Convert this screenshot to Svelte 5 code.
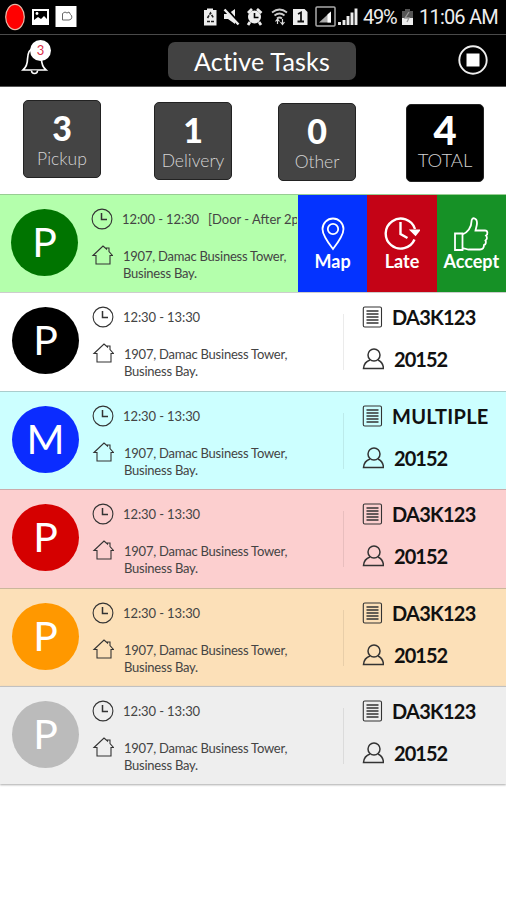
<script>
  // Totals shown above the list. `drop` is the small vertical offset of
  // each tile within the strip.
  const totals = [
    { count: 3, label: 'Pickup', drop: 13, left: 23 },
    { count: 1, label: 'Delivery', drop: 15, left: 53 },
    { count: 0, label: 'Other', drop: 16, left: 46 },
    { count: 4, label: 'TOTAL', drop: 17, left: 50, total: true },
  ];

  const tasks = [
    { type: 'P', tone: 'green', time: '12:00 - 12:30', note: '[Door - After 2pm]', open: true },
    { type: 'P', tone: 'white', time: '12:30 - 13:30', ref: 'DA3K123', customer: '20152' },
    { type: 'M', tone: 'cyan', time: '12:30 - 13:30', ref: 'MULTIPLE', customer: '20152' },
    { type: 'P', tone: 'red', time: '12:30 - 13:30', ref: 'DA3K123', customer: '20152' },
    { type: 'P', tone: 'orange', time: '12:30 - 13:30', ref: 'DA3K123', customer: '20152' },
    { type: 'P', tone: 'grey', time: '12:30 - 13:30', ref: 'DA3K123', customer: '20152' },
  ];
</script>

<div class="app">
  <div class="status">
    <svg class="status-left" width="80" height="34" viewBox="0 0 80 34">
      <ellipse cx="15" cy="17" rx="9.3" ry="12.6" fill="#f00" stroke="#e9b8a8" stroke-width="1.2" />
      <path d="M33 10h15v14h-15z" fill="none" stroke="#fff" stroke-width="2" />
      <path d="M34 11h13v6l-3-2-3 3-3-2-4 4z" fill="#000" />
      <path d="M34 20l4-3 3 2 3-3 3 3v4H34z" fill="#fff" />
      <circle cx="37" cy="13.5" r="1.4" fill="#fff" />
      <path d="M55.5 6h21v21h-21z" fill="#fff" />
      <path d="M62.500 20v-6.500l2.500-1.500 2 1 2-1 1.500 2.500a3 3 0 0 1-1.500 5.500z" fill="none" stroke="#666" />
    </svg>
    <svg class="status-right" width="158" height="34" viewBox="203 0 158 34">
      <path d="M204 10h3V8.500h6V10h3.500v15.500H204z" fill="#eee" />
      <path d="M207.500 18l3-5 3 5M207 21.500h7" fill="none" stroke="#222" stroke-width="1.600" stroke-dasharray="3 1" />
      <path d="M224 14h4l7-5v15l-7-5h-4z" fill="#eee" />
      <path d="M225.500 7.500l14 16" stroke="#000" stroke-width="2" />
      <path d="M224.500 9.500l14 15" stroke="#eee" stroke-width="2.400" />
      <circle cx="254.500" cy="17" r="6.500" fill="#eee" />
      <path d="M248 13l4-4M257 9l4.500 4M250 22l-2 3M259 22l2 3" stroke="#eee" stroke-width="2.800" />
      <path d="M254.500 13v4.500h4" fill="none" stroke="#000" stroke-width="1.600" />
      <path d="M272 12.500q7.500-6 15 0M274.500 15.500q5-4 10 0M277 18.500q2.500-2 5 0" fill="none" stroke="#ccc" stroke-width="1.800" />
      <path d="M277.500 19v5M275.500 21.500l2-2.500 2 2.500M282.500 19v5M280.500 22l2 2.500 2-2.500" fill="none" stroke="#ddd" stroke-width="1.200" />
      <path d="M293 9h11.500l3 3v13H293z" fill="#eee" />
      <path d="M298 14l3-1.500V21M297.500 21.500h6.500" fill="none" stroke="#111" stroke-width="1.800" />
      <rect x="316" y="7" width="19" height="19" rx="1" fill="none" stroke="#aaa" stroke-width="1.500" />
      <path d="M319 22.500l12-11v11z" fill="#aaa" />
      <path d="M327.500 22.500v-8l3.500-3v11z" fill="#fff" />
      <path d="M339.500 22v3M344 20v5M348 16v9M352 12.500v12.500M356 8.500V25" stroke="#eee" stroke-width="2.900" />
    </svg>
    <span class="percent">49%</span>
    <svg class="battery" width="13" height="18" viewBox="0 0 13 18">
      <path d="M1 3h3V1h5v2h3v7H1z" fill="#555" />
      <path d="M1 10h11v7H1z" fill="#eee" />
      <path d="M8 4l-4 6h4l-2 4" fill="none" stroke="#999" stroke-width="1.300" />
    </svg>
    <span class="time">11:06 AM</span>
  </div>

  <header>
    <div class="bell">
      <svg width="28" height="30" viewBox="0 0 28 30">
        <path d="M2 25q4.500-4 4.500-11Q7 4 13 3q7 1 7.500 11 0 7 4.500 11z" fill="none" stroke="#fff" stroke-width="1.700" />
        <path d="M10.500 25.500a3 3 0 0 0 6 0" fill="#000" stroke="#fff" stroke-width="1.500" />
      </svg>
      <span class="count">3</span>
    </div>
    <h1>Active Tasks</h1>
    <svg class="stop" width="30" height="30" viewBox="0 0 30 30">
      <circle cx="15" cy="15" r="13.700" fill="none" stroke="#eee" stroke-width="1.900" />
      <path d="M8.500 8.500h13v13h-13z" fill="#fff" />
    </svg>
  </header>

  <section class="totals">
    {#each totals as item}
      <div class="tile" class:total={item.total} style="margin: {item.drop}px 0 0 {item.left}px">
        <strong>{item.count}</strong>
        <span>{item.label}</span>
      </div>
    {/each}
  </section>

  {#each tasks as task}
    <article class="task {task.tone}" class:open={task.open}>
      <div class="type">{task.type}</div>

      <div class="details">
        <div class="slot">
          <svg width="22" height="22" viewBox="0 0 22 22">
            <circle cx="11" cy="11" r="9.900" />
            <path d="M10.500 5v6.500h5.500" stroke-width="1.500" />
          </svg>
          <span class="hours">{task.time}</span>
          {#if task.note}<span class="note">{task.note}</span>{/if}
        </div>
        <div class="place">
          <svg width="22" height="21" viewBox="0 0 22 21">
            <path d="M2 11.500L12 2l3.500 3V4h2.500v3.500l3.500 4h-2.500V20H5v-8.500z" />
          </svg>
          <p>1907, Damac Business Tower,<br />Business Bay.</p>
        </div>
      </div>

      {#if task.open}
        <div class="actions">
          <button type="button" class="map">
            <svg width="36" height="36" viewBox="0 0 36 36">
              <path d="M18 33Q7.500 19.500 7.500 13a10.500 10.500 0 0 1 21 0Q28.500 19.500 18 33z" />
              <circle cx="18" cy="13" r="5.200" />
            </svg>
            Map
          </button>
          <button type="button" class="late">
            <svg width="36" height="36" viewBox="0 0 36 36">
              <path d="M30.500 23.500A15 15 0 1 1 31 13" stroke-width="2.400" />
              <path d="M27 14.500h8l-3.500 4.500z" fill="#fff" />
              <path d="M16.500 6v12l7 4" stroke-width="2.400" />
            </svg>
            Late
          </button>
          <button type="button" class="accept">
            <svg width="36" height="36" viewBox="0 0 36 36">
              <path d="M2 17.500h7.500V34H2zM9.500 18.500c5-2 9-7 9-13 0-5 5.500-4 5.500 1.500 0 3-1 5-1.500 7.500H32c3 0 3 4 1 5 1.500 2 1 4-.5 5 1 2 0 4-1.500 4.500 0 3-1 4.500-4 4.500H15.500l-6-1.500" />
            </svg>
            Accept
          </button>
        </div>
      {:else}
        <div class="codes">
          <div>
            <svg width="22" height="22" viewBox="0 0 22 22">
              <rect x="1.300" y="1" width="18.200" height="20" rx="1.500" />
              <path d="M4.500 5h12M4.500 8h12M4.500 11h12M4.500 14h12M4.500 17h12" stroke-width="1.300" />
            </svg>
            <b class="ref" class:wide={task.ref === 'MULTIPLE'}>{task.ref}</b>
          </div>
          <div>
            <svg width="22" height="22" viewBox="0 0 22 22">
              <circle cx="12" cy="7" r="6" stroke-width="1.500" />
              <path d="M8 12q-6 2-6.500 8.500h20Q21 14 16 12" stroke-width="1.500" />
            </svg>
            <b class="customer">{task.customer}</b>
          </div>
        </div>
      {/if}
    </article>
  {/each}
</div>

<style>
  :global(body) {
    margin: 0;
    background: #fff;
  }

  .app {
    width: 506px;
    height: 900px;
    overflow: hidden;
    font-family: Lato, 'Liberation Sans', sans-serif;
    background: #fff;
  }

  .app,
  .app * {
    box-sizing: border-box;
  }

  svg {
    display: block;
    flex: none;
  }

  .status {
    display: flex;
    align-items: center;
    height: 35px;
    color: #eee;
    background: #000;
    border-bottom: 1px solid #4a4a4a;
    font: 20px/36px Roboto, sans-serif;
    white-space: nowrap;
  }

  .status-right {
    margin-left: 123px;
  }

  .percent {
    width: 38px;
    margin-left: 2px;
    letter-spacing: -1.2px;
  }

  .time {
    margin-left: 5px;
    letter-spacing: -0.8px;
  }

  header {
    display: flex;
    align-items: flex-start;
    height: 52px;
    color: #fff;
    background: #000;
    border-bottom: 1px solid #555;
  }

  .bell {
    position: relative;
    margin: 10px 0 0 21px;
  }

  .count {
    position: absolute;
    top: -5px;
    left: 9px;
    width: 21px;
    height: 21px;
    border-radius: 50%;
    background: #fff;
    color: #d8304a;
    font-size: 13px;
    line-height: 21px;
    text-align: center;
  }

  h1 {
    width: 188px;
    height: 38px;
    margin: 7px 0 0 119px;
    border-radius: 7px;
    background: #424242;
    font-size: 25px;
    font-weight: 400;
    line-height: 39px;
    letter-spacing: 0.2px;
    text-align: center;
  }

  .stop {
    margin: 10px 0 0 102px;
  }

  .totals {
    display: flex;
    align-items: flex-start;
    height: 107px;
  }

  .tile {
    display: flex;
    flex: none;
    flex-direction: column;
    align-items: center;
    width: 78px;
    height: 78px;
    padding-top: 11px;
    border: 1px solid #222;
    border-radius: 5px;
    background: #444;
    color: #fff;
  }

  .tile strong {
    font-size: 34px;
    font-weight: 900;
    line-height: 32px;
  }

  .tile span {
    margin-top: 5px;
    color: #d4d4d4;
    font-size: 17.5px;
    font-weight: 300;
    line-height: 20px;
  }

  .tile.total {
    background: #000;
    padding-top: 8px;
  }

  .tile.total strong {
    font-size: 40px;
    line-height: 35px;
  }

  .tile.total span {
    margin-top: 2px;
    font-size: 18.5px;
  }

  .task {
    display: flex;
    height: 98.4px;
    padding-left: 12px;
    border-top: 1px solid rgba(90, 90, 90, 0.3);
    overflow: hidden;
  }

  .task.open {
    padding-left: 11px;
  }

  .task:last-child {
    box-shadow: 0 1px 2px #aaa;
  }

  .type {
    flex: none;
    width: 67px;
    height: 67px;
    margin-top: 14px;
    border-radius: 50%;
    color: #fff;
    font-size: 41px;
    line-height: 66px;
    text-align: center;
  }

  .green { background: #b4ffac; }
  .green .type { background: #007400; }
  .white { background: #fff; }
  .white .type { background: #000; }
  .cyan { background: #ccffff; }
  .cyan .type { background: #0b2cff; }
  .red { background: #fccfcf; }
  .red .type { background: #d50000; }
  .orange { background: #fce0b8; }
  .orange .type { background: #ff9800; }
  .grey { background: #eee; }
  .grey .type { background: #bbb; }

  .details {
    flex: none;
    width: 206px;
    margin-left: 13px;
    padding-top: 13px;
    overflow: hidden;
    color: #444;
    font-size: 13px;
    white-space: nowrap;
  }

  .details svg,
  .codes svg {
    fill: none;
    stroke: #333;
    stroke-width: 1.1;
  }

  .slot {
    display: flex;
    height: 22px;
    line-height: 23px;
  }

  .hours {
    width: 78px;
    margin-left: 9px;
    letter-spacing: -0.1px;
  }

  .note {
    margin-left: 9px;
  }

  .place {
    display: flex;
    margin-top: 14px;
  }

  .place p {
    margin: 4px 0 0 10px;
    line-height: 17px;
    letter-spacing: -0.23px;
  }

  .actions {
    display: flex;
    flex: 1;
    margin-left: 1px;
  }

  .actions button {
    display: flex;
    flex: 1;
    flex-direction: column;
    align-items: center;
    padding: 21px 0 0;
    border: 0;
    color: #fff;
    font: 700 18px/20px Lato, sans-serif;
  }

  .actions svg {
    margin-bottom: -1px;
    fill: none;
    stroke: #fff;
    stroke-width: 1.8;
  }

  .actions .map { background: #0433ff; }
  .actions .late { background: #c40316; }
  .actions .accept { background: #169126; }

  .codes {
    height: 56px;
    margin: 21px 0 0 45px;
    padding-left: 18px;
    border-left: 1px solid rgba(0, 0, 0, 0.08);
    color: #111;
    font-size: 20px;
    line-height: 22px;
    white-space: nowrap;
  }

  .codes div {
    display: flex;
    margin: -8px 0 28px;
  }

  .codes b {
    margin-left: 8px;
  }

  .codes .ref {
    letter-spacing: -0.75px;
  }

  .codes .ref.wide {
    letter-spacing: 0.25px;
  }

  .codes .customer {
    margin-left: 10px;
    letter-spacing: -0.95px;
  }
</style>
